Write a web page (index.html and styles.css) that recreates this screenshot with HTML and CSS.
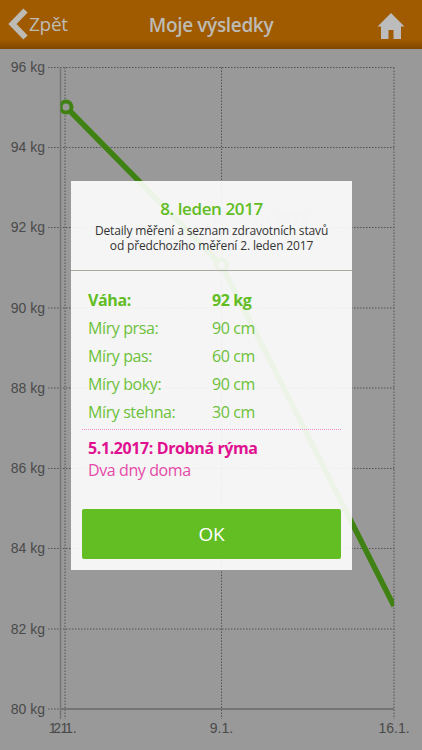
FILE: index.html
```html
<!DOCTYPE html>
<html lang="cs">
<head>
<meta charset="utf-8">
<title>Moje výsledky</title>
<link rel="stylesheet" href="styles.css">
</head>
<body>
<div class="app">
  <header class="bar">
    <a class="back">
      <svg class="chev" viewBox="0 0 20 32" width="20" height="32"><path d="M17.500 2.500 4.500 16l13 13.500" fill="none" stroke="#bdbbb4" stroke-width="6"/></svg>
      <span>Zpět</span>
    </a>
    <h1 class="title">Moje výsledky</h1>
    <svg class="home" viewBox="0 0 28 28" width="28" height="28"><path d="M14 1 .5 14.500H4V27h7.500v-9h5v9H24V14.500h3.500z" fill="#bcbcbc"/></svg>
  </header>
  <svg class="chart" viewBox="0 49 422 701" width="422" height="701">
    <defs><clipPath id="plot"><rect x="60.500" y="60" width="333.500" height="660"/></clipPath></defs>
    <g class="grid">
      <path d="M48 67.500H394M48 147.500H394M48 227.500H394M48 308H394M48 388H394M48 468.500H394M48 548.500H394M48 629H394M48 709H60"/>
      <path d="M65 67.500V719M221.500 67.500V719M394 67.500V719"/>
    </g>
    <path class="axis" d="M60.500 67.500V719"/>
    <path class="axis-x" d="M60.500 709H394"/>
    <g class="ylab">
      <text x="45" y="72">96 kg</text><text x="45" y="152">94 kg</text><text x="45" y="232">92 kg</text>
      <text x="45" y="313">90 kg</text><text x="45" y="393">88 kg</text><text x="45" y="473">86 kg</text>
      <text x="45" y="553">84 kg</text><text x="45" y="634">82 kg</text><text x="45" y="714">80 kg</text>
    </g>
    <g class="xlab">
      <text x="60.500" y="733">1.1.</text><text x="65" y="733">2.1.</text>
      <text x="221.500" y="733">9.1.</text><text x="394" y="733">16.1.</text>
    </g>
    <g clip-path="url(#plot)">
      <path class="series" d="M66 107 221.500 265 394 606"/>
      <circle class="dot" cx="66" cy="107" r="5.500"/>
      <circle class="dot" cx="221.500" cy="265" r="5.500"/>
    </g>
    <rect class="ghost" x="215" y="205" width="92" height="26"/>
    <text class="ghost-text" x="261" y="223">8. leden 2017</text>
  </svg>
  <div class="scrim"></div>
  <section class="modal">
    <div class="head">
      <h2 class="date">8. leden 2017</h2>
      <p class="sub">Detaily měření a seznam zdravotních stavů<br>od předchozího měření 2. leden 2017</p>
    </div>
    <div class="body">
      <dl class="rows">
        <dt class="strong">Váha:</dt><dd class="strong">92 kg</dd>
        <dt>Míry prsa:</dt><dd>90 cm</dd>
        <dt>Míry pas:</dt><dd>60 cm</dd>
        <dt>Míry boky:</dt><dd>90 cm</dd>
        <dt>Míry stehna:</dt><dd>30 cm</dd>
      </dl>
      <div class="note">
        <p class="note-title">5.1.2017: Drobná rýma</p>
        <p class="note-text">Dva dny doma</p>
      </div>
      <button class="ok">OK</button>
    </div>
  </section>
</div>
</body>
</html>
```
FILE: styles.css
```css
* { box-sizing: border-box; }
html, body { margin: 0; padding: 0; }
body { font-family: "Open Sans", "Noto Sans", sans-serif; background: #fff; }
.app { position: relative; width: 422px; height: 750px; overflow: hidden; background: #fff; }
.bar {
  height: 49px; display: flex; align-items: center; justify-content: space-between;
  padding: 0 17px 0 8px; color: #bdbbb4;
  background: linear-gradient(#a05a00 0, #a05a00 40px, #7f4800 49px);
  position: relative; z-index: 1;
}
.back { display: flex; align-items: center; gap: 1px; font-size: 19px; letter-spacing: -.3px; }
.chev { display: block; margin-top: -1px; }
.back span { margin-top: -1px; }
.title { position: absolute; left: 0; right: 0; margin: 0; text-align: center; font-size: 19px; letter-spacing: -.35px; font-weight: 600; top: 11px; line-height: 28px; }
.home { display: block; margin-top: 2px; }
.chart { display: block; }
.grid path { fill: none; stroke: #8a8a8a; stroke-width: 1; stroke-dasharray: 1.500 1.500; }
.axis { fill: none; stroke: #c4c4c4; stroke-width: 1.500; }
.axis-x { fill: none; stroke: #c4c4c4; stroke-width: 2; }
.ylab text { font: 14px "Liberation Sans", sans-serif; fill: #7c7c7c; text-anchor: end; }
.xlab text { font: 14px "Liberation Sans", sans-serif; fill: #7c7c7c; text-anchor: middle; }
.series { fill: none; stroke: #69d81e; stroke-width: 5.500; }
.dot { fill: #fff; stroke: #69d81e; stroke-width: 4; }
.ghost { fill: #fff; opacity: .7; }
.ghost-text { font: 600 15px "Open Sans", sans-serif; fill: #ddd; text-anchor: middle; }
.scrim { position: absolute; inset: 0; background: rgba(0, 0, 0, .4); }
.modal {
  position: absolute; left: 71px; top: 181px; width: 281px; height: 389px;
  background: rgba(255, 255, 255, .9);
}
.head { height: 90px; border-bottom: 1px solid #a9a9a0; padding-top: 17px; text-align: center; }
.date { margin: 0; font-size: 17px; letter-spacing: -.4px; line-height: 22px; font-weight: 600; color: #62bd24; }
.sub { margin: 3px 0 0; font-size: 12px; letter-spacing: -.15px; line-height: 15px; color: #333; }
.body { padding: 15px 11px 0; }
.rows {
  margin: 0; padding: 0 0 3px 6px; display: grid; grid-template-columns: 124px 1fr; grid-auto-rows: 28px;
  align-items: center; font-size: 16px; letter-spacing: -.4px; color: #6cc13a; border-bottom: 1px dotted #f08ccb;
}
.rows dt, .rows dd { margin: 0; line-height: 28px; }
.strong { font-weight: 700; color: #62bd24; }
.note { padding: 7px 0 0 6px; }
.note-title { margin: 0; font-size: 16px; letter-spacing: -.4px; line-height: 22px; font-weight: 700; color: #e01190; }
.note-text { margin: 0; font-size: 16px; letter-spacing: -.4px; line-height: 22px; color: #e54aa8; }
.ok {
  display: block; width: 259px; height: 50px; margin-top: 28px; border: 0; border-radius: 2px;
  background: #62be23; color: #fff; font: 19px "Open Sans", sans-serif; letter-spacing: -.3px;
}
```
